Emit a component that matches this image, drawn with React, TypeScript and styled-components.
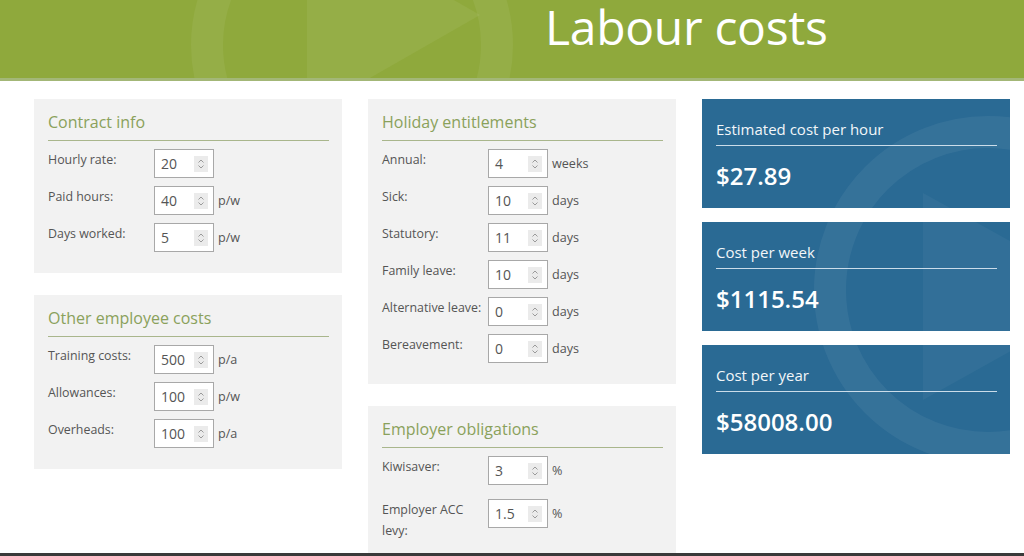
import * as React from 'react';
import styled, { createGlobalStyle } from 'styled-components';

// watermark for the result cards, fixed to the viewport so it runs across all three
const blueMarkSvg = `<svg xmlns='http://www.w3.org/2000/svg' width='1024' height='556' viewBox='0 0 1024 556'>
<circle cx='988' cy='290' r='158' fill='none' stroke='rgba(255,255,255,0.055)' stroke-width='32'/>
<path d='M923 193 L1110 296 L923 400 Z' fill='rgba(255,255,255,0.04)'/>
</svg>`;
const blueMark = `url("data:image/svg+xml,${encodeURIComponent(blueMarkSvg)}")`;

const GlobalStyle = createGlobalStyle`
  html, body {
    margin: 0;
    padding: 0;
    background: #fff;
    overflow: hidden;
  }
  body {
    font-family: "Open Sans", "Liberation Sans", sans-serif;
    color: #555;
  }
`;

const Page = styled.div`
  width: 1024px;
  height: 556px;
  overflow: hidden;
`;

const Header = styled.header`
  position: relative;
  height: 78px;
  background: #8fa93c;
  border-bottom: 3px solid #a3b777;
  overflow: hidden;
  padding-left: 545px;
`;

const HeaderMark = styled.svg`
  position: absolute;
  left: 0;
  top: 0;
`;

const Title = styled.h1`
  position: relative;
  margin: 0;
  font-family: "Open Sans", sans-serif;
  font-weight: 400;
  font-size: 48px;
  line-height: 54px;
  color: #fff;
  letter-spacing: -0.3px;
`;

const Main = styled.main`
  display: grid;
  grid-template-columns: 308px 308px 308px;
  column-gap: 26px;
  align-items: start;
  padding: 18px 0 0 34px;
`;

const Column = styled.div<{ $gap: number }>`
  display: flex;
  flex-direction: column;
  gap: ${(p) => p.$gap}px;
`;

const Panel = styled.section`
  background: #f2f2f2;
  padding: 12px 13px 21px 14px;
`;

const PanelTitle = styled.h2`
  margin: 0 0 8px;
  padding-bottom: 7px;
  border-bottom: 1px solid #a9b68c;
  font-family: "Open Sans", sans-serif;
  font-weight: 400;
  font-size: 16px;
  line-height: 22px;
  color: #8aa15b;
`;

const Fields = styled.div<{ $gap?: number }>`
  display: flex;
  flex-direction: column;
  gap: ${(p) => p.$gap ?? 8}px;
`;

const Row = styled.div`
  display: flex;
  align-items: flex-start;
`;

const Label = styled.label`
  width: 106px;
  flex: none;
  padding-right: 4px;
  box-sizing: border-box;
  font-size: 12.4px;
  line-height: 21px;
  color: #555;
`;

const NumberBox = styled.div`
  width: 60px;
  height: 29px;
  box-sizing: border-box;
  border: 1px solid #a8a8a8;
  background: #fff;
  display: flex;
  align-items: center;
  justify-content: space-between;
  padding: 0 5px 0 6px;
  font-size: 14px;
  color: #555;
`;

const Spinner = styled.span`
  width: 14px;
  height: 16px;
  background: #ebebeb;
  display: flex;
  align-items: center;
  justify-content: center;
`;

const Unit = styled.span`
  margin-left: 4px;
  font-size: 12.6px;
  line-height: 29px;
  color: #555;
`;

const Card = styled.section`
  height: 109px;
  box-sizing: border-box;
  padding: 19px 13px 0 14px;
  background: #2a6a94 ${blueMark} no-repeat fixed 0 0;
  color: #fff;
`;

const CardTitle = styled.h3`
  margin: 0 0 14px;
  padding-bottom: 5px;
  border-bottom: 1px solid rgba(230, 240, 248, 0.85);
  font-family: "Open Sans", sans-serif;
  font-weight: 400;
  font-size: 15px;
  line-height: 22px;
  color: #f2f6f9;
`;

const CardValue = styled.div`
  font-family: "Open Sans", sans-serif;
  font-weight: 600;
  font-size: 24px;
  line-height: 32px;
  color: #fff;
`;

const BottomBar = styled.div`
  position: fixed;
  left: 0;
  right: 0;
  bottom: 0;
  height: 3px;
  background: #3a3a3a;
`;

const SpinIcon = () => (
  <svg width="8" height="12" viewBox="0 0 8 12" fill="none" stroke="#9a9a9a" strokeWidth="1">
    <path d="M1.5 4.5 L4 2 L6.5 4.5" />
    <path d="M1.5 7.5 L4 10 L6.5 7.5" />
  </svg>
);

interface FieldProps {
  label: string;
  value: string;
  unit?: string;
}

const Field = ({ label, value, unit }: FieldProps) => (
  <Row>
    <Label>{label}</Label>
    <NumberBox>
      <span>{value}</span>
      <Spinner>
        <SpinIcon />
      </Spinner>
    </NumberBox>
    {unit && <Unit>{unit}</Unit>}
  </Row>
);

const results = [
  { title: 'Estimated cost per hour', value: '$27.89' },
  { title: 'Cost per week', value: '$1115.54' },
  { title: 'Cost per year', value: '$58008.00' },
];

export default function App() {
  return (
    <Page>
      <GlobalStyle />
      <Header>
        <HeaderMark width="1024" height="78" viewBox="0 0 1024 78">
          <circle cx="352" cy="45" r="145" fill="none" stroke="rgba(255,255,255,0.06)" strokeWidth="32" />
          <path d="M307 -84 L480 15 L307 114 Z" fill="rgba(255,255,255,0.06)" />
        </HeaderMark>
        <Title>Labour costs</Title>
      </Header>
      <Main>
        <Column $gap={22}>
          <Panel>
            <PanelTitle>Contract info</PanelTitle>
            <Fields>
              <Field label="Hourly rate:" value="20" />
              <Field label="Paid hours:" value="40" unit="p/w" />
              <Field label="Days worked:" value="5" unit="p/w" />
            </Fields>
          </Panel>
          <Panel>
            <PanelTitle>Other employee costs</PanelTitle>
            <Fields>
              <Field label="Training costs:" value="500" unit="p/a" />
              <Field label="Allowances:" value="100" unit="p/w" />
              <Field label="Overheads:" value="100" unit="p/a" />
            </Fields>
          </Panel>
        </Column>
        <Column $gap={22}>
          <Panel>
            <PanelTitle>Holiday entitlements</PanelTitle>
            <Fields>
              <Field label="Annual:" value="4" unit="weeks" />
              <Field label="Sick:" value="10" unit="days" />
              <Field label="Statutory:" value="11" unit="days" />
              <Field label="Family leave:" value="10" unit="days" />
              <Field label="Alternative leave:" value="0" unit="days" />
              <Field label="Bereavement:" value="0" unit="days" />
            </Fields>
          </Panel>
          <Panel>
            <PanelTitle>Employer obligations</PanelTitle>
            <Fields $gap={14}>
              <Field label="Kiwisaver:" value="3" unit="%" />
              <Field label="Employer ACC levy:" value="1.5" unit="%" />
            </Fields>
          </Panel>
        </Column>
        <Column $gap={14}>
          {results.map((r) => (
            <Card key={r.title}>
              <CardTitle>{r.title}</CardTitle>
              <CardValue>{r.value}</CardValue>
            </Card>
          ))}
        </Column>
      </Main>
      <BottomBar />
    </Page>
  );
}
